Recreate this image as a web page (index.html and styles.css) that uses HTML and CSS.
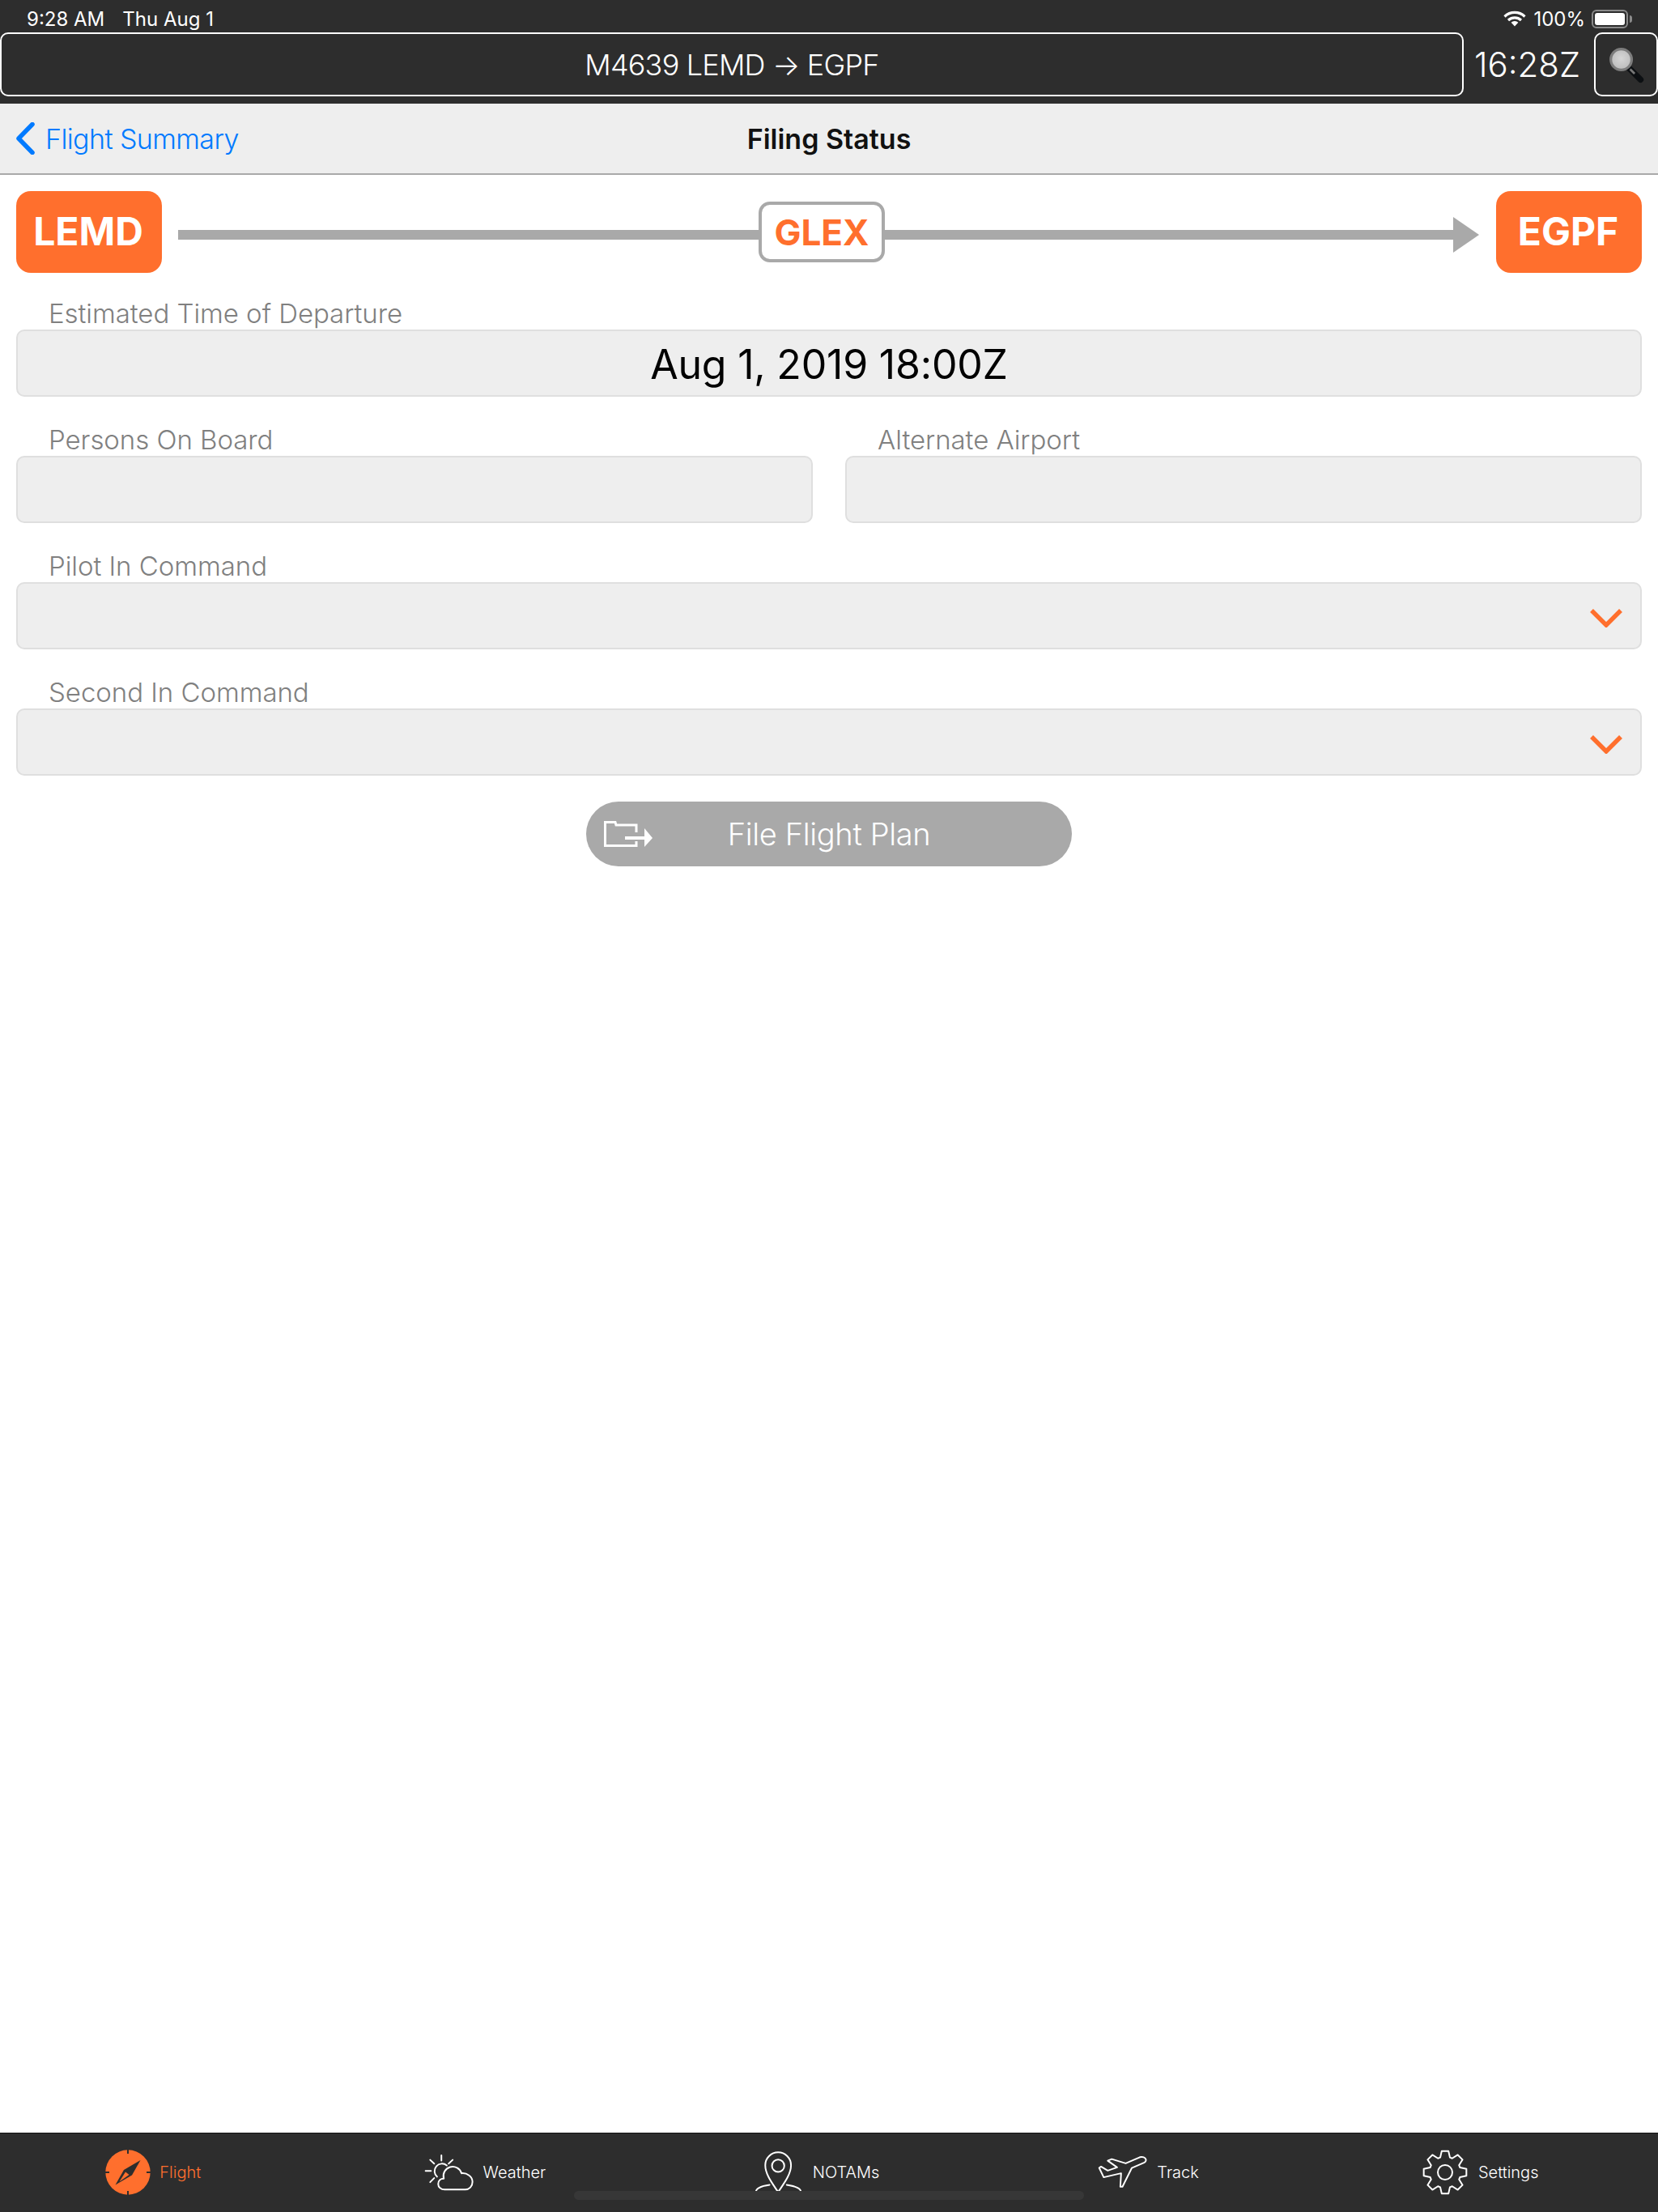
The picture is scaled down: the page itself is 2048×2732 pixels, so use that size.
FILE: index.html

```html
<!DOCTYPE html>
<html lang="en">
<head>
  <meta charset="UTF-8" />
  <meta name="viewport" content="width=device-width, initial-scale=1.0" />
  <title>Filing Status</title>
  <link rel="stylesheet" href="styles.css">
</head>
<body>
  <div class="app">
    <header class="top">
      <div class="status">
        <div class="status-left"><span>9:28 AM</span><span>Thu Aug 1</span></div>
        <div class="status-right">
          <svg class="wifi" viewBox="0 0 28 20">
            <path d="M1.5 7.5A18 18 0 0 1 26.5 7.5M6 12A12 12 0 0 1 22 12" fill="none" stroke="#fff" stroke-width="3.2"/>
            <path d="M14 19.5L9.6 14.7A6.4 6.4 0 0 1 18.4 14.7Z" fill="#fff"/>
          </svg>
          <span class="pct">100%</span>
          <div class="battery"><div class="battery-fill"></div></div>
          <div class="battery-nub"></div>
        </div>
      </div>
      <div class="bar">
        <div class="flight-box">M4639 LEMD → EGPF</div>
        <div class="clock">16:28Z</div>
        <div class="search-box">
          <svg class="search-icon" viewBox="0 0 50 50">
            <defs>
              <radialGradient id="lens" cx="50%" cy="45%" r="55%">
                <stop offset="0%" stop-color="#d6d6d6"/>
                <stop offset="100%" stop-color="#bcbcbc"/>
              </radialGradient>
            </defs>
            <path d="M28 29L44 45" stroke="#0c0f12" stroke-width="8" stroke-linecap="round"/>
            <path d="M30 31L36 37" stroke="#777" stroke-width="3"/>
            <circle cx="18" cy="18" r="14" fill="url(#lens)" stroke="#7d7d7d" stroke-width="3.5"/>
          </svg>
        </div>
      </div>
    </header>

    <nav class="nav">
      <div class="back">
        <svg class="back-icon" viewBox="0 0 24 40"><path d="M21 2.5L4 20L21 37.5" fill="none" stroke="#007aff" stroke-width="5.5" stroke-linecap="round" stroke-linejoin="round"/></svg>
        <span>Flight Summary</span>
      </div>
      <div class="nav-title">Filing Status</div>
    </nav>

    <main class="main">
      <div class="route">
        <div class="airport">LEMD</div>
        <div class="route-line">
          <div class="seg seg-left"></div>
          <div class="aircraft">GLEX</div>
          <div class="seg seg-right"></div>
          <div class="head"></div>
        </div>
        <div class="airport">EGPF</div>
      </div>

      <div class="form">
        <div class="field">
          <label>Estimated Time of Departure</label>
          <div class="box value">Aug 1, 2019 18:00Z</div>
        </div>
        <div class="two">
          <div class="field">
            <label>Persons On Board</label>
            <div class="box"></div>
          </div>
          <div class="field">
            <label>Alternate Airport</label>
            <div class="box"></div>
          </div>
        </div>
        <div class="field">
          <label>Pilot In Command</label>
          <div class="box select">
            <svg class="chev" viewBox="0 0 40 24"><path d="M2 3L20 21L38 3" fill="none" stroke="#ff6f2d" stroke-width="5.5"/></svg>
          </div>
        </div>
        <div class="field">
          <label>Second In Command</label>
          <div class="box select">
            <svg class="chev" viewBox="0 0 40 24"><path d="M2 3L20 21L38 3" fill="none" stroke="#ff6f2d" stroke-width="5.5"/></svg>
          </div>
        </div>
      </div>

      <div class="file-btn">
        <svg class="folder" viewBox="0 0 60 32">
          <path d="M40 14V5H15L14 1.5H1.5V30.5H40V25" fill="none" stroke="#fff" stroke-width="3"/>
          <path d="M26 21H50" stroke="#fff" stroke-width="4"/>
          <path d="M50 9L60 21L50 32Z" fill="#fff"/>
        </svg>
        <span>File Flight Plan</span>
      </div>
    </main>

    <footer class="tabs">
      <div class="tab active">
        <svg class="ic-flight" viewBox="0 0 56 56">
          <circle cx="28" cy="28" r="27.7" fill="#ff6f2d"/>
          <path d="M28 0V5M28 51V56M0 28H5M51 28H56" stroke="#2d2d2d" stroke-width="2"/>
          <path d="M43.5 13L33 31.5L12.5 43.5L23 25Z" fill="#2d2d2d"/>
          <path d="M25 27.5L29.5 31L17.5 39.5Z" fill="#ff6f2d"/>
        </svg>
        <span>Flight</span>
      </div>
      <div class="tab">
        <svg class="ic-weather" viewBox="40 50 185 145">
          <g fill="none" stroke="#fff" stroke-width="6" stroke-linecap="round" stroke-linejoin="round">
            <path d="M103 59V79M61 76L76 90M145 76L130 90M44 117H64M61 159L76 144"/>
            <path d="M123 97A27 27 0 0 0 87 139"/>
            <path d="M112 146A32 32 0 0 1 178 126C198 124 219 138 219 158C219 175 207 187 192 187H115C101 187 91 177 91 166C91 154 100 146 112 146Z"/>
          </g>
        </svg>
        <span>Weather</span>
      </div>
      <div class="tab">
        <svg class="ic-notams" viewBox="35 40 185 160">
          <g fill="none" stroke="#fff" stroke-width="6" stroke-linecap="round" stroke-linejoin="round">
            <path d="M125 195C105 165 77 130 77 95A48 48 0 0 1 173 95C173 130 145 165 125 195Z"/>
            <circle cx="125" cy="97" r="23"/>
            <path d="M93 168C65 172 42 180 42 195M157 168C185 172 210 180 210 195"/>
          </g>
        </svg>
        <span>NOTAMs</span>
      </div>
      <div class="tab">
        <svg class="ic-track" viewBox="45 70 190 130">
          <path d="M228 90C226 80 214 77 205 80L152 103L100 87L85 93L120 118L85 130L60 115L53 120L70 155L135 140L132 190H140L175 120L222 100C226 98 228 94 228 90Z" fill="none" stroke="#fff" stroke-width="6" stroke-linejoin="round"/>
        </svg>
        <span>Track</span>
      </div>
      <div class="tab">
        <svg class="ic-settings" viewBox="-90 -90 180 180">
          <path d="M-17.9 -55.2L-12.5 -79H12.5L17.9 -55.2L26.4 -51.7L47 -64.7L64.7 -47L51.7 -26.4L55.2 -17.9L79 -12.5V12.5L55.2 17.9L51.7 26.4L64.7 47L47 64.7L26.4 51.7L17.9 55.2L12.5 79H-12.5L-17.9 55.2L-26.4 51.7L-47 64.7L-64.7 47L-51.7 26.4L-55.2 17.9L-79 12.5V-12.5L-55.2 -17.9L-51.7 -26.4L-64.7 -47L-47 -64.7L-26.4 -51.7Z" fill="none" stroke="#fff" stroke-width="6" stroke-linejoin="round"/>
          <circle r="27" fill="none" stroke="#fff" stroke-width="6"/>
        </svg>
        <span>Settings</span>
      </div>
      <div class="home-bar"></div>
    </footer>
  </div>
</body>
</html>
```

FILE: styles.css

```css
* {
  box-sizing: border-box;
}
body {
  margin: 0;
  background: white;
  font-family: Inter, "Liberation Sans", sans-serif;
  color: #000;
}
.app {
  width: 2048px;
  height: 2732px;
  display: flex;
  flex-direction: column;
  overflow: hidden;
}

/* top bars */
.top {
  background: #2d2d2d;
  color: white;
  height: 128px;
  flex: none;
}
.status {
  height: 40px;
  display: flex;
  justify-content: space-between;
  align-items: center;
  padding: 6px 32px 0 33px;
  font-size: 24px;
  font-weight: 400;
}
.status-left {
  display: flex;
  gap: 22px;
}
.status-right {
  display: flex;
  align-items: center;
}
.wifi {
  width: 28px;
  height: 20px;
  margin-right: 9px;
}
.pct {
  margin-right: 8px;
}
.battery {
  width: 45px;
  height: 23px;
  border: 2px solid #8a8a8a;
  border-radius: 6px;
  padding: 2px;
}
.battery-fill {
  height: 100%;
  background: white;
  border-radius: 3px;
}
.battery-nub {
  width: 3px;
  height: 9px;
  margin-left: 2px;
  background: #8a8a8a;
  border-radius: 0 3px 3px 0;
}
.bar {
  display: flex;
  align-items: flex-start;
  height: 80px;
}
.flight-box {
  width: 1808px;
  height: 79px;
  border: 2px solid white;
  border-radius: 10px;
  display: flex;
  align-items: center;
  justify-content: center;
  font-size: 36px;
  font-weight: 300;
  letter-spacing: -0.8px;
}
.clock {
  width: 161px;
  height: 79px;
  display: flex;
  align-items: center;
  justify-content: center;
  padding-right: 4px;
  font-size: 42px;
  font-weight: 300;
}
.search-box {
  width: 79px;
  height: 79px;
  border: 2px solid white;
  border-radius: 10px;
  display: flex;
  align-items: center;
  justify-content: center;
}
.search-icon {
  width: 46px;
  height: 46px;
}

.nav {
  height: 88px;
  flex: none;
  background: #eeeeee;
  border-bottom: 2px solid #a9a9a9;
  display: grid;
  grid-template-columns: 1fr auto 1fr;
  align-items: center;
}
.back {
  display: flex;
  align-items: center;
  gap: 13px;
  padding-left: 19px;
  color: #007aff;
  font-size: 34px;
  font-weight: 300;
  letter-spacing: -0.6px;
}
.back-icon {
  width: 24px;
  height: 40px;
}
.nav-title {
  font-size: 34px;
  font-weight: 600;
  color: #111;
}

/* main form */
.main {
  flex: 1;
  padding: 20px 20px 0;
}
.route {
  display: flex;
  align-items: center;
  height: 101px;
}
.airport {
  width: 180px;
  height: 101px;
  padding: 0 2px 2px 0;
  background: #ff6f2d;
  border-radius: 18px;
  color: white;
  font-size: 48px;
  font-weight: 700;
  display: flex;
  align-items: center;
  justify-content: center;
}
.route-line {
  flex: 1;
  display: flex;
  align-items: center;
  margin: 0 21px 0 20px;
}
.seg {
  height: 12px;
  background: #a9a9a9;
  margin-top: 7px;
}
.seg-left {
  width: 717px;
}
.seg-right {
  flex: 1;
}
.aircraft {
  width: 156px;
  height: 75px;
  border: 4px solid #a9a9a9;
  border-radius: 14px;
  color: #ff6f2d;
  background: white;
  font-size: 44px;
  font-weight: 700;
  display: flex;
  align-items: center;
  justify-content: center;
}
.head {
  width: 0;
  height: 0;
  margin-top: 7px;
  border-left: 32px solid #a9a9a9;
  border-top: 22px solid transparent;
  border-bottom: 22px solid transparent;
}
.form {
  display: flex;
  flex-direction: column;
  gap: 33px;
  margin-top: 30px;
}
.two {
  display: grid;
  grid-template-columns: 1fr 1fr;
  gap: 40px;
}
label {
  display: block;
  height: 40px;
  line-height: 40px;
  padding-left: 40px;
  color: #808080;
  font-size: 33px;
  font-weight: 300;
  letter-spacing: -0.05px;
}
.box {
  height: 83px;
  background: #eeeeee;
  border: 2px solid #dfdfdf;
  border-radius: 10px;
}
.value {
  display: flex;
  align-items: center;
  justify-content: center;
  padding-top: 2px;
  font-size: 50px;
  font-weight: 400;
  letter-spacing: -0.2px;
}
.select {
  display: flex;
  align-items: center;
  justify-content: flex-end;
  padding-right: 22px;
}
.chev {
  width: 40px;
  height: 24px;
  margin-top: 4px;
}
.file-btn {
  width: 600px;
  height: 80px;
  margin: 32px auto 0;
  background: #a9a9a9;
  border-radius: 40px;
  color: white;
  display: grid;
  grid-template-columns: 1fr auto 1fr;
  align-items: center;
  font-size: 38px;
  font-weight: 300;
  letter-spacing: -0.35px;
}
.folder {
  width: 60px;
  height: 32px;
  margin-left: 22px;
}

/* tab bar */
.tabs {
  position: relative;
  height: 98px;
  flex: none;
  background: #2d2d2d;
  border-top: 1px solid #111;
  display: grid;
  grid-template-columns: repeat(5, 1fr);
  color: white;
  font-size: 20px;
  font-weight: 300;
}
.tab {
  display: flex;
  align-items: center;
  justify-content: center;
  gap: 11px;
  padding-right: 31px;
  padding-bottom: 2px;
}
.tab.active {
  color: #ff6f2d;
}
.ic-flight {
  width: 56px;
  height: 56px;
}
.ic-weather {
  width: 62px;
  height: 48px;
}
.ic-notams {
  width: 62px;
  height: 53px;
}
.ic-track {
  width: 63px;
  height: 43px;
}
.ic-settings {
  width: 60px;
  height: 60px;
}
.home-bar {
  position: absolute;
  left: 709px;
  top: 71px;
  width: 630px;
  height: 11px;
  border-radius: 6px;
  background: #373737;
}
```
